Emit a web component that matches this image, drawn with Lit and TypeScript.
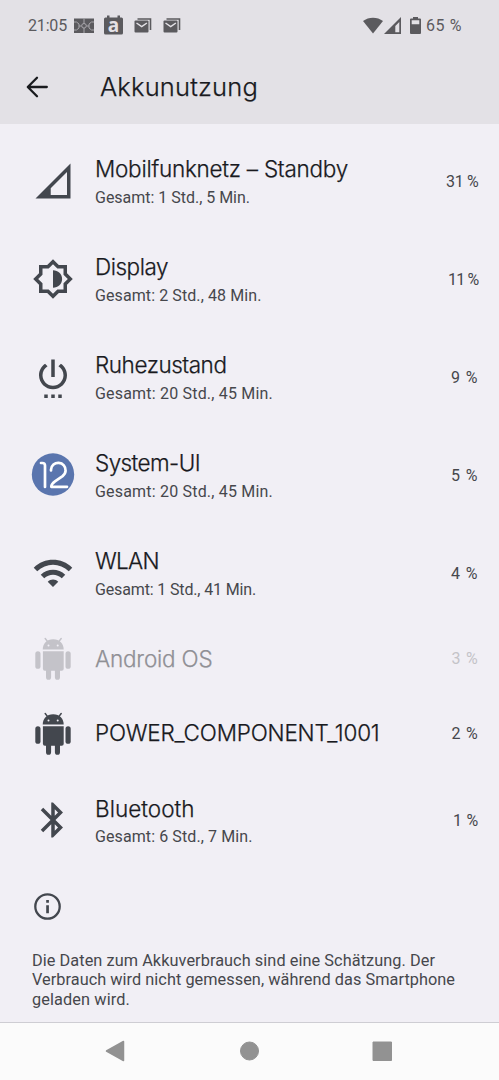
import { LitElement, html, svg, css, nothing } from "lit";
import { customElement, property } from "lit/decorators.js";
import { classMap } from "lit/directives/class-map.js";

/* One line of text whose tracking is adjusted so that it fills a given width. */
@customElement("fit-text")
class FitText extends LitElement {
  static styles = css`
    :host { display: block; white-space: nowrap; }
    .line { display: inline-block; }
  `;
  @property() text = "";
  @property({ type: Number }) width = 0;

  async firstUpdated() {
    this.fit();
    await document.fonts.ready;
    this.fit();
  }
  fit() {
    const line = this.renderRoot.querySelector(".line") as HTMLElement;
    line.style.letterSpacing = "0px";
    const natural = line.getBoundingClientRect().width;
    const gap = (this.width - natural) / this.text.length;
    line.style.letterSpacing = `${gap.toFixed(3)}px`;
  }
  render() {
    return html`<span class="line">${this.text}</span>`;
  }
}

const robot = svg`
  <path d="M10.700 11.600C10.800 6 14.500 1.300 21.200 1.300S31.600 6 31.700 11.600Z"/>
  <path class="antenna" d="M13.200 .500l2.600 3.400M29.200 .500l-2.600 3.400"/>
  <circle class="eye" cx="16.500" cy="7.400" r="1"/><circle class="eye" cx="25.700" cy="7.400" r="1"/>
  <path d="M10.900 13.200h20.800v17.500a2 2 0 0 1-2 2h-16.800a2 2 0 0 1-2-2z"/>
  <rect x="3.300" y="13.200" width="5.200" height="17.600" rx="2.600"/>
  <rect x="33.500" y="13.200" width="5.200" height="17.600" rx="2.600"/>
  <path d="M14 31h5.100v8.200a2.550 2.550 0 0 1-5.100 0zM22.900 31h5.100v8.200a2.550 2.550 0 0 1-5.100 0z"/>`;

const icons: Record<string, unknown> = {
  cell: html`<svg viewBox="0 0 24 24"><path fill-rule="evenodd" d="M2 22 22 2v20zM10.700 20h9.300V6.800l-9.300 9.300z"/></svg>`,
  display: html`<svg viewBox="0 0 24 24"><path d="M20 15.310 23.310 12 20 8.690V4h-4.690L12 .690 8.690 4H4v4.690L.690 12 4 15.310V20h4.690L12 23.310 15.310 20H20zM18 14.480V18h-3.520L12 20.480 9.520 18H6v-3.520L3.520 12 6 9.520V6h3.520L12 3.520 14.480 6H18v3.520L20.480 12z" fill-rule="evenodd"/><path d="M12 7c2.900 0 5.200 2.240 5.200 5S14.900 17 12 17z"/></svg>`,
  power: html`<svg viewBox="0 0 24 24"><path d="M7 24h2v-2H7v2zm4 0h2v-2h-2v2zm2-22h-2v10h2V2zm3.560 2.440l-1.450 1.450C16.840 6.940 18 8.830 18 11c0 3.310-2.690 6-6 6s-6-2.690-6-6c0-2.170 1.160-4.060 2.880-5.120L7.440 4.440C5.360 5.880 4 8.280 4 11c0 4.420 3.580 8 8 8s8-3.580 8-8c0-2.720-1.360-5.120-3.440-6.560zM15 24h2v-2h-2v2z"/></svg>`,
  twelve: html`<svg viewBox="0 0 42 42"><circle class="disc" cx="21" cy="20.500" r="21.200"/><path class="digits" d="M9 9h1.400q2.600 0 2.600 2.600v21.400M19 16.400v-.800a7.300 7.300 0 0 1 14.600 1c0 2.500-1.300 4.100-3 5.500l-7.600 5.200c-3.400 2.400-3.700 4.500-3.700 5.500h15.700"/></svg>`,
  wifi: html`<svg viewBox="0 0 24 24"><path d="M1 9l2 2c4.970-4.970 13.030-4.970 18 0l2-2C16.930 2.930 7.080 2.930 1 9zm8 8l3 3 3-3c-1.650-1.660-4.340-1.660-6 0zm-4-4l2 2c2.760-2.760 7.240-2.760 10 0l2-2C15.140 9.140 8.870 9.140 5 13z"/></svg>`,
  robot: html`<svg viewBox="0 0 42 42">${robot}</svg>`,
  bluetooth: html`<svg viewBox="0 0 24 24"><path d="M17.710 7.710 12 2h-1v7.590L6.410 5 5 6.410 10.590 12 5 17.590 6.410 19 11 14.410V22h1l5.710-5.710-4.300-4.290zM13 5.830l1.880 1.880L13 9.590zm1.880 10.460L13 18.170v-3.760z"/></svg>`,
};

interface Usage {
  icon: string;
  name: string;
  nameWidth: number;
  total?: string;
  totalWidth?: number;
  share: string;
  shareWidth: number;
  dim?: boolean;
}

const usages: Usage[] = [
  { icon: "cell", name: "Mobilfunknetz – Standby", nameWidth: 253, total: "Gesamt: 1 Std., 5 Min.", totalWidth: 155, share: "31 %", shareWidth: 32.5 },
  { icon: "display", name: "Display", nameWidth: 73, total: "Gesamt: 2 Std., 48 Min.", totalWidth: 166.5, share: "11 %", shareWidth: 30.5 },
  { icon: "power", name: "Ruhezustand", nameWidth: 131.5, total: "Gesamt: 20 Std., 45 Min.", totalWidth: 178, share: "9 %", shareWidth: 27.5 },
  { icon: "twelve", name: "System-UI", nameWidth: 105, total: "Gesamt: 20 Std., 45 Min.", totalWidth: 178, share: "5 %", shareWidth: 27.5 },
  { icon: "wifi", name: "WLAN", nameWidth: 64, total: "Gesamt: 1 Std., 41 Min.", totalWidth: 161, share: "4 %", shareWidth: 27.5 },
  { icon: "robot", name: "Android OS", nameWidth: 117.5, share: "3 %", shareWidth: 27, dim: true },
  { icon: "robot", name: "POWER_COMPONENT_1001", nameWidth: 284.5, share: "2 %", shareWidth: 27 },
  { icon: "bluetooth", name: "Bluetooth", nameWidth: 99.5, total: "Gesamt: 6 Std., 7 Min.", totalWidth: 157.5, share: "1 %", shareWidth: 25.5 },
];

@customElement("app-root")
class AppRoot extends LitElement {
  static styles = css`
    :host {
      display: flex; flex-direction: column; height: 1080px; box-sizing: border-box; overflow: hidden;
      background: #f1eff5; color: #191a1e; font-family: Inter, Roboto, sans-serif; font-weight: 350;
    }
    svg { display: block; overflow: visible; }
    .top { flex: none; height: 124px; background: #e3e1e6; }
    .status { height: 50px; display: flex; align-items: center; padding: 0 37px 0 28px; color: #5b5a5e; fill: #5b5a5e; font: 450 16px/20px Roboto, sans-serif; }
    .status fit-text { padding-top: 2px; }
    .court { margin-left: 7px; }
    .calendar { margin-left: 10px; }
    .mail { margin-left: 12px; }
    .glyph { font: 700 19px "Open Sans", sans-serif; fill: #e3e1e6; }
    .cut { fill: none; stroke: #e3e1e6; stroke-width: 1.5; }
    .thin { fill: none; stroke: #a9a7ac; stroke-width: 1; }
    .back-sheet { fill: none; stroke: #5b5a5e; stroke-width: 1.6; }
    .spacer { flex: 1; }
    .signal { margin-left: 1px; }
    .battery { margin: 0 5px 0 9px; }
    .bar { height: 74px; display: flex; align-items: center; padding-left: 26px; }
    .arrow { fill: none; stroke: #191a1e; stroke-width: 2.3; stroke-linecap: round; stroke-linejoin: round; }
    .heading { margin-left: 52px; font-size: 25.5px; line-height: 32px; }
    .heading, .name { -webkit-text-stroke: .25px currentColor; }
    .list { flex: none; padding-top: 8px; }
    .row { height: 98px; display: flex; align-items: center; padding: 0 20.500px 0 32px; }
    .row.single { height: 74.700px; }
    .icon { flex: none; width: 42px; height: 42px; margin-right: 21px; fill: #43474e; }
    .label { flex: 1; }
    .name { font-size: 22.500px; line-height: 30px; }
    .total { font: 16px/20px Roboto, sans-serif; color: #46474c; margin-top: 3.500px; }
    .single .label { padding-bottom: 1.500px; }
    .share { font: 16px/20px Roboto, sans-serif; color: #46474c; padding-top: 1px; }
    .single .share { padding-top: 0; }
    .dim .icon { fill: #c4c3c9; }
    .dim .antenna { stroke: #c4c3c9; }
    .dim .name { color: #909095; }
    .dim .share { color: #c4c3c8; }
    .antenna { fill: none; stroke: #43474e; stroke-width: 1.5; stroke-linecap: round; }
    .eye { fill: #f1eff5; }
    .disc { fill: #5a75ae; }
    .digits { fill: none; stroke: #fff; stroke-width: 2.700; stroke-linecap: round; stroke-linejoin: round; }
    .info { padding: 23.500px 0 0 34px; }
    .ring { fill: none; stroke: #43474e; stroke-width: 2.3; }
    .dot { fill: #43474e; }
    .note { padding: 30.700px 0 0 32px; font: 16.300px/19.900px Roboto, sans-serif; color: #46474c; }
    .nav { flex: none; margin-top: auto; height: 57px; border-top: 1px solid #cecdd3; background: #fbfbfb; fill: #929292; stroke: #929292; stroke-linejoin: round; }
  `;

  private mail() {
    return html`<svg class="mail" width="17" height="15" viewBox="0 0 17 15"><path class="back-sheet" d="M2.500 1h13v11"/><rect x="-.500" y="2.500" width="14" height="12" rx="1"/><path class="cut" d="M1.500 5 6.700 8.600 11.900 5"/></svg>`;
  }

  private row(u: Usage) {
    return html`
      <div class=${classMap({ row: true, single: !u.total, dim: !!u.dim })}>
        <div class="icon">${icons[u.icon]}</div>
        <div class="label">
          <fit-text class="name" .text=${u.name} .width=${u.nameWidth}></fit-text>
          ${u.total ? html`<fit-text class="total" .text=${u.total} .width=${u.totalWidth}></fit-text>` : nothing}
        </div>
        <fit-text class="share" .text=${u.share} .width=${u.shareWidth}></fit-text>
      </div>`;
  }

  render() {
    return html`
      <div class="top">
        <div class="status">
          <fit-text .text=${"21:05"} .width=${39}></fit-text>
          <svg class="court" width="20" height="15" viewBox="0 0 20 15"><rect x="0" y=".500" width="20" height="14.500"/><path class="thin" d="M10 .500v5M10 10v5M0 4h2.500l2.500 2v4l-2.500 2H0M20 4h-2.500l-2.500 2v4l2.500 2H20M5 8h2.500M12.500 8H15"/><circle class="thin" cx="10" cy="7.800" r="2.300"/></svg>
          <svg class="calendar" width="19" height="20" viewBox="0 0 19 20"><path d="M3 .500h2.500v2H13.500v-2H16v2h1.500a1.500 1.500 0 0 1 1.500 1.500v14a1.500 1.500 0 0 1-1.500 1.500h-16A1.500 1.500 0 0 1 0 18V4a1.500 1.500 0 0 1 1.500-1.500H3z"/><text class="glyph" x="9.500" y="16.800" text-anchor="middle">a</text></svg>
          ${this.mail()}${this.mail()}
          <div class="spacer"></div>
          <svg width="20" height="17" viewBox="0 0 20 17"><path d="M10 16.500 0 4C5.500-.500 14.500-.500 20 4z"/></svg>
          <svg class="signal" width="17" height="17" viewBox="0 0 17 17"><path fill-rule="evenodd" d="M0 17 17 0v17zM11.300 15.200h4V5l-4 4z"/></svg>
          <svg class="battery" width="11" height="17" viewBox="0 0 11 17"><path fill-rule="evenodd" d="M3 0h5v1.500h2a1 1 0 0 1 1 1V16a1 1 0 0 1-1 1H1a1 1 0 0 1-1-1V2.500a1 1 0 0 1 1-1h2zM1.700 3.300v4h7.600v-4z"/></svg>
          <fit-text .text=${"65 %"} .width=${36}></fit-text>
        </div>
        <div class="bar">
          <svg width="22" height="22" viewBox="0 0 22 22"><path class="arrow" d="M20.800 11H2M11 1.800 1.800 11l9.200 9.200"/></svg>
          <fit-text class="heading" .text=${"Akkunutzung"} .width=${158}></fit-text>
        </div>
      </div>
      <div class="list">${usages.map((u) => this.row(u))}</div>
      <div class="info">
        <svg width="27" height="27" viewBox="0 0 27 27"><circle class="ring" cx="13.500" cy="13.500" r="12.200"/><path class="dot" d="M12.200 12.200h2.700v8h-2.700zM12.200 7h2.700v2.700h-2.700z"/></svg>
      </div>
      <div class="note">
        <fit-text .text=${"Die Daten zum Akkuverbrauch sind eine Schätzung. Der"} .width=${403}></fit-text>
        <fit-text .text=${"Verbrauch wird nicht gemessen, während das Smartphone"} .width=${423}></fit-text>
        <fit-text .text=${"geladen wird."} .width=${98}></fit-text>
      </div>
      <div class="nav">
        <svg width="499" height="57" viewBox="0 0 499 57"><path d="M106.500 28 123.500 18.500v19z" stroke-width="1.500"/><circle cx="249.500" cy="28" r="9"/><rect x="373" y="19" width="18.500" height="18.500"/></svg>
      </div>`;
  }
}
